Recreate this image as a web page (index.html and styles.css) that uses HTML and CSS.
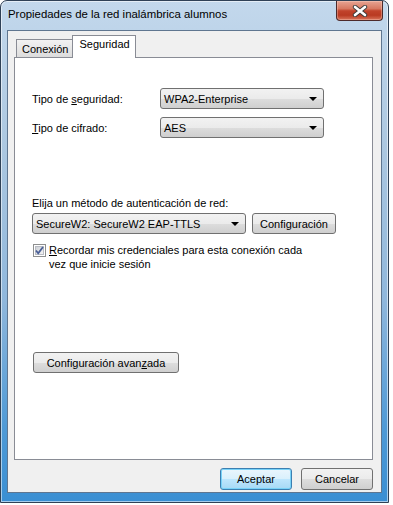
FILE: index.html
```html
<!DOCTYPE html>
<html>
  <head>
    <title>Propiedades de la red inalámbrica alumnos</title>
    <link rel="stylesheet" href="styles.css">
  </head>
  <body>
    <div class="window">
      <div class="titlebar">
        <span class="title">Propiedades de la red inalámbrica alumnos</span>
        <div class="closeBtn">
          <svg width="16" height="12" viewBox="0 0 16 12">
            <path d="M3 2 L13 10 M13 2 L3 10" stroke="#3b3b3b" stroke-width="4.4" stroke-linecap="round"/>
            <path d="M3 2 L13 10 M13 2 L3 10" stroke="#ffffff" stroke-width="2.6" stroke-linecap="round"/>
          </svg>
        </div>
      </div>

      <div class="client">
        <div class="tabs">
          <div class="tab">Conexión</div>
          <div class="tab active">Seguridad</div>
        </div>

        <div class="panel">
          <div class="formRow">
            <label class="fieldLabel">Tipo de <u>s</u>eguridad:</label>
            <div class="combo">
              <span>WPA2-Enterprise</span>
              <span class="arrow"></span>
            </div>
          </div>
          <div class="formRow">
            <label class="fieldLabel"><u>T</u>ipo de cifrado:</label>
            <div class="combo">
              <span>AES</span>
              <span class="arrow"></span>
            </div>
          </div>

          <div class="authBlock">
            <p class="authLabel">Elija un método de autenticación de red:</p>
            <div class="authRow">
              <div class="combo wide">
                <span>SecureW2: SecureW2 EAP-TTLS</span>
                <span class="arrow"></span>
              </div>
              <div class="btn configBtn">Confi<u>g</u>uración</div>
            </div>
            <div class="checkRow">
              <svg class="checkbox" width="13" height="13" viewBox="0 0 13 13">
                <defs>
                  <linearGradient id="cbFill" x1="0" y1="0" x2="1" y2="1">
                    <stop offset="0" stop-color="#cbcfd5"/>
                    <stop offset="1" stop-color="#f6f6f6"/>
                  </linearGradient>
                </defs>
                <rect x="0.5" y="0.5" width="12" height="12" fill="#ffffff" stroke="#8e8f8f"/>
                <rect x="2.5" y="2.5" width="8" height="8" fill="url(#cbFill)" stroke="#b9bcc4"/>
                <path d="M3 6.5 L5.2 9.2 L10 3" fill="none" stroke="#4a5f97" stroke-width="1.8"/>
              </svg>
              <span class="checkText"><u>R</u>ecordar mis credenciales para esta conexión cada vez que inicie sesión</span>
            </div>
          </div>

          <div class="btn advancedBtn">Configuración avan<u>z</u>ada</div>
        </div>

        <div class="footer">
          <div class="btn default">Aceptar</div>
          <div class="btn">Cancelar</div>
        </div>
      </div>
    </div>
  </body>
</html>
```

FILE: styles.css
```css
body {
  margin: 0;
  background: #ffffff;
  font-family: "Liberation Sans", Arial, sans-serif;
  font-size: 11px;
  color: #000000;
}

u {
  text-decoration: underline;
  text-underline-offset: 1px;
}

.window {
  width: 389px;
  height: 503px;
  box-sizing: border-box;
  border: 1px solid #2f4156;
  border-radius: 7px 7px 0 0;
  background: linear-gradient(to bottom, #c3d8ec 0%, #abc7e0 30%, #8fb7dc 60%, #4f9ad6 85%, #3a8fd3 100%);
  box-shadow: inset 0 0 0 1px rgba(255, 255, 255, 0.55);
  display: flex;
  flex-direction: column;
}

.titlebar {
  flex: none;
  height: 29px;
  display: flex;
  align-items: flex-start;
  padding-left: 7px;
}

.title {
  margin-top: 7px;
  font-size: 11.4px;
  color: #000000;
}

.closeBtn {
  margin-left: auto;
  margin-right: 5px;
  width: 45px;
  height: 19px;
  border: 1px solid #4d2a2a;
  border-top: none;
  border-radius: 0 0 4px 4px;
  background: linear-gradient(to bottom, #e7a493 0%, #d77962 40%, #c1432b 52%, #b93a22 75%, #d9745a 100%);
  display: flex;
  align-items: center;
  justify-content: center;
  box-shadow: inset 0 0 0 1px rgba(255, 220, 210, 0.35);
}

.client {
  margin: 0 6px 9px 6px;
  flex: 1;
  border: 1px solid #5f7690;
  background: #f0f0f0;
  padding: 5px 8px 0 6px;
  display: flex;
  flex-direction: column;
}

.tabs {
  display: flex;
  align-items: flex-end;
  padding-left: 2px;
  height: 21px;
}

.tab {
  height: 17px;
  padding: 0 4px 0 5px;
  border: 1px solid #898c95;
  border-bottom: none;
  border-right: none;
  background: linear-gradient(to bottom, #f2f2f2, #dcdcdc);
  line-height: 19px;
}

.tab.active {
  height: 22px;
  margin-bottom: -1px;
  padding: 0 5px 0 6px;
  border-right: 1px solid #898c95;
  background: #ffffff;
  line-height: 17px;
  position: relative;
}

.panel {
  height: 403px;
  box-sizing: border-box;
  border: 1px solid #898c95;
  background: #ffffff;
  padding: 30px 0 0 17px;
}

.formRow {
  display: flex;
  align-items: center;
  margin-bottom: 8px;
}

.fieldLabel {
  width: 128px;
}

.combo {
  width: 164px;
  height: 21px;
  box-sizing: border-box;
  border: 1px solid #707070;
  border-radius: 3px;
  background: linear-gradient(to bottom, #f2f2f2 0%, #ebebeb 50%, #dddddd 51%, #cfcfcf 100%);
  display: flex;
  align-items: center;
  justify-content: space-between;
  padding: 0 5px 0 3px;
}

.combo.wide {
  width: 214px;
}

.arrow {
  width: 0;
  height: 0;
  border-left: 4px solid transparent;
  border-right: 4px solid transparent;
  border-top: 4px solid #000000;
  margin-right: 1px;
}

.authBlock {
  margin-top: 58px;
}

.authLabel {
  margin: 0 0 2px 0;
  line-height: 15px;
}

.authRow {
  display: flex;
  gap: 6px;
}

.btn {
  height: 21px;
  box-sizing: border-box;
  border: 1px solid #707070;
  border-radius: 3px;
  background: linear-gradient(to bottom, #f2f2f2 0%, #ebebeb 50%, #dddddd 51%, #cfcfcf 100%);
  display: flex;
  align-items: center;
  justify-content: center;
}

.configBtn {
  width: 84px;
}

.checkRow {
  display: flex;
  align-items: flex-start;
  margin-top: 9px;
}

.checkbox {
  margin: 1px 3px 0 1px;
  flex: none;
}

.checkText {
  width: 264px;
  line-height: 14px;
}

.advancedBtn {
  width: 146px;
  margin-top: 81px;
  margin-left: 1px;
}

.footer {
  display: flex;
  justify-content: flex-end;
  gap: 9px;
  margin-top: 8px;
}

.footer .btn {
  width: 72px;
  height: 22px;
}

.btn.default {
  border-color: #3c7fb1;
  background: linear-gradient(to bottom, #eaf6fd 0%, #d9f0fc 50%, #bee6fd 51%, #a7d9f5 100%);
  box-shadow: inset 0 0 0 1px #78d2f8;
}
```
